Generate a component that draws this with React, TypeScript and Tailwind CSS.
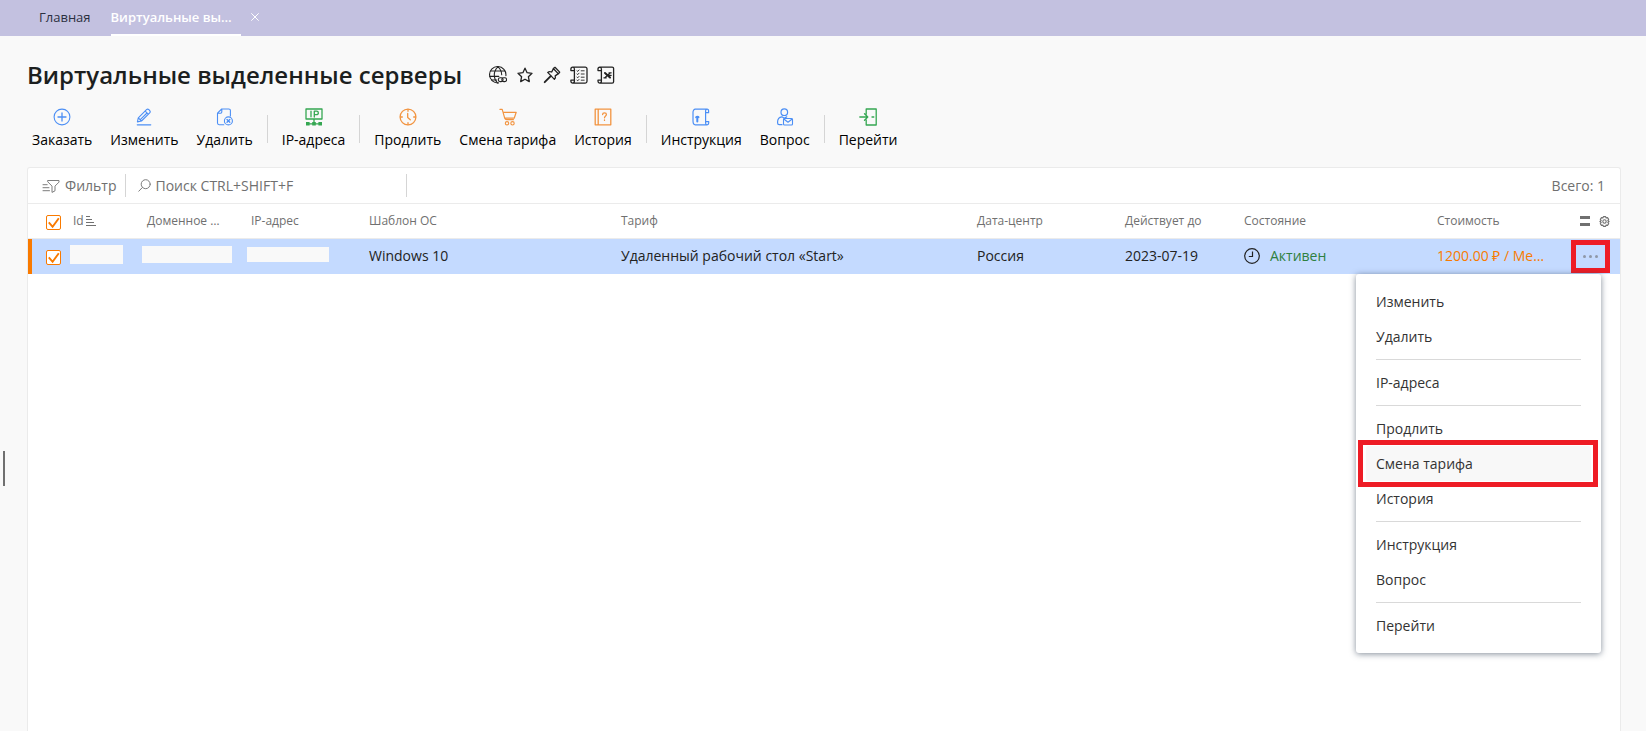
import React from 'react';

type IconProps = { className?: string; children: React.ReactNode };

function Icon({ className = '', children }: IconProps) {
  return (
    <svg
      className={`h-[18px] w-[18px] shrink-0 ${className}`}
      viewBox="0 0 18 18"
      fill="none"
      stroke="currentColor"
      strokeWidth="1.1"
      strokeLinecap="round"
      strokeLinejoin="round"
      aria-hidden="true"
    >
      {children}
    </svg>
  );
}

/* Title icons */
const GlobeIcon = () => (
  <Icon>
    <path d="M16.9 9.6A8.2 8.2 0 1 0 9.6 16.9" />
    <path d="M9 .8C6.4 3 5.3 6 5.3 9c0 3 1 5.700 3.200 7.800M9 .8c2.400 2 3.600 4.700 3.700 8M2 5h14M.8 10.400h9M2.600 14h5" />
    <rect x="9.300" y="11.800" width="4.800" height="3.800" rx="1.900" />
    <rect x="12.800" y="11.800" width="4.800" height="3.800" rx="1.900" />
  </Icon>
);

const StarIcon = () => (
  <Icon>
    <path strokeWidth="1.3" d="M9 2.200l2.100 4.500 4.900.6-3.600 3.400.9 4.900L9 13.200l-4.300 2.400.9-4.900L2 7.300l4.900-.6z" />
  </Icon>
);

const PinIcon = () => (
  <Icon>
    <path strokeWidth="1.300" d="M10.300 2.500l1.700-1.200 4.700 4.800-1.300 1.800zM10.300 2.900L8.700 6M15 7.900l-2.800 2M8.700 6c-1.500-.6-2.900-.5-4 .4l6.700 7c1-1 1.300-2.200.8-3.500" />
    <path strokeWidth="1.900" d="M7.700 10.200L1.700 16.200" />
  </Icon>
);

const ScrollIcon = () => (
  <Icon>
    <path strokeWidth="1.3" d="M4.300 4.600H.9V3a1.800 1.800 0 0 1 1.700-1.900h12.600A1.800 1.800 0 0 1 17 3v12.200a1.900 1.900 0 0 1-1.800 1.900H2.700A1.800 1.800 0 0 1 .9 15.300v-1.100h3.400M4.400 14.200V3c0-1.100-.7-1.900-1.700-1.900M4.400 14.200V15c0 1.200-.6 2.100-1.700 2.100" />
    <path strokeWidth=".9" d="M7 4.800l.8.600 1.200-1.400M11.200 4.800h3M7 8l.8.600L9 7.200M11.200 8h3M7 11.200l.8.600L9 10.400M11.200 11.200h3M7 14.200l.8.600L9 13.400M11.200 14.200h3" />
  </Icon>
);

const ExcelIcon = () => (
  <Icon>
    <path strokeWidth="1.300" d="M4.300 4.600H1V3a1.800 1.800 0 0 1 1.700-1.900h12.500A1.400 1.400 0 0 1 16.600 2.500v13.200a1.400 1.400 0 0 1-1.400 1.400H2.700A1.800 1.800 0 0 1 1 15.300v-1.100h3.300M4.400 14.200V3c0-1.100-.7-1.900-1.700-1.900M4.400 14.200V15c0 1.200-.6 2.100-1.700 2.100" />
    <path strokeWidth="2" d="M8 7l5 4.600" />
    <path strokeWidth="1.200" d="M13.300 6.800l-5.400 5M12 6.800h2.200M6.900 11.800h2.400M12 9.300h2.200" />
  </Icon>
);

/* Toolbar icons */
const PlusIcon = () => (
  <Icon className="text-[#4c8ff5]">
    <circle cx="9" cy="9" r="7.900" />
    <path strokeWidth="1.300" d="M9 5v8M5 9h8" />
  </Icon>
);

const PencilIcon = () => (
  <Icon className="text-[#4c8ff5]">
    <path d="M2.400 13.900l.9-4.100L11.500 1.700c.9-.8 1.600-.7 2.400 0l.8.900c.7.800.8 1.500 0 2.300L6.500 13zM10.200 3.100L13.300 6.200M3.300 9.800L6.500 13M12 5L5.500 11.400" />
    <path strokeWidth="1.300" d="M2.300 16.800h13.400" />
  </Icon>
);

const DeleteIcon = () => (
  <Icon className="text-[#4c8ff5]">
    <path d="M7.800 16.700H3.100a1.600 1.600 0 0 1-1.600-1.600V5.200L5.700 1h7.100a1.600 1.600 0 0 1 1.600 1.600V8M5.800 1.200v2.900c0 .8-.5 1.200-1.200 1.200h-3" />
    <circle cx="12.400" cy="12.900" r="4" />
    <path strokeWidth="1.300" d="M11 11.500l2.800 2.800M13.800 11.500L11 14.300" />
  </Icon>
);

const IpIcon = () => (
  <Icon className="text-[#35a752]">
    <path strokeWidth="1.300" d="M1 1h16v10H1zM9 11v5M3 15.800h12M6 3.200v5.600M9.300 9V3.200h2.300a1.700 1.700 0 0 1 0 3.500H9.300" />
    <path fill="currentColor" stroke="none" d="M1 14h3.600v3.500H1zM7.200 14h3.600v3.500H7.200zM13.400 14H17v3.500h-3.600z" />
  </Icon>
);

const ClockIcon = () => (
  <Icon className="text-[#f29440]">
    <circle cx="9" cy="9" r="7.900" strokeWidth="1.300" />
    <path strokeWidth="1.300" d="M9 1.500v1.800M9 14.700v1.800M1.500 9h1.800M14.700 9h1.800M8.700 5.500v4.100l2.600 2.200" />
  </Icon>
);

const CartIcon = () => (
  <Icon className="text-[#f29440]">
    <path strokeWidth="1.200" d="M.9 1.300h2.300l2.500 8.900c.3 1 .9 1.500 2 1.500h6.700M4 4.300h13.200l-2 5.900H5.700" />
    <circle cx="8" cy="15.300" r="1.700" />
    <circle cx="13.500" cy="15.300" r="1.700" />
  </Icon>
);

const HistoryIcon = () => (
  <Icon className="text-[#f29440]">
    <path strokeWidth="1.300" d="M1.200 1.200h15.600v15.600H1.200zM4.200 1.200v15.600M8.600 6.600c0-1.100.8-1.700 1.900-1.700s1.900.6 1.900 1.700c0 1.300-1.900 1.500-1.900 3.200M10.500 12v.4" />
  </Icon>
);

const ManualIcon = () => (
  <Icon className="text-[#4c8ff5]">
    <path strokeWidth="1.200" d="M16.600 4.700V2.900c0-.9-.5-1.700-1.500-1.700H3.300c-1.300 0-2.300 1.300-2.300 3v8.600c0 2 .6 4 2.300 4h11.800c1 0 1.600-.8 1.600-1.700v-1.500M16.600 4.700h-3V2.900c0-1 .6-1.700 1.500-1.700M13.600 4.700v10.200c0 1.100.5 1.900 1.500 1.900M13.600 13.600h3.100" />
    <path strokeWidth="2" d="M5.300 9.200v4.200" />
    <path strokeWidth="1.500" d="M3.900 9.500c0-1.400 2.800-1.400 2.800 0" />
  </Icon>
);

const QuestionIcon = () => (
  <Icon className="text-[#4c8ff5]">
    <circle cx="8.300" cy="4.200" r="3.300" strokeWidth="1.200" />
    <path strokeWidth="1.200" d="M6 16.700H3.200c-1.100 0-1.600-.6-1.600-1.600v-1.300c0-3.200 1.500-4.600 4.300-5l2.400 1.400 2.400-1.300" />
    <rect x="7.500" y="10.500" width="9" height="6.500" rx="1" />
    <path d="M7.800 11l4.200 3.300L16.200 11" />
  </Icon>
);

const EnterIcon = () => (
  <Icon className="text-[#35a752]">
    <path strokeWidth="1.300" d="M7.200 6.200V1h10v16h-10v-5.200M.8 9h8M5.500 5.800L8.800 9l-3.300 3.200M13 9h1.800" />
  </Icon>
);

/* Panel icons */
const FilterIcon = () => (
  <Icon className="text-[#7d7d7d]">
    <path strokeWidth="1" d="M6 3.500h11v1.600l-4 4v4.700l-3 1.600V9.100l-4-4zM1 7.700h4.200M1 10.700h6M1 13.700h6.500" />
  </Icon>
);

const SearchIcon = () => (
  <svg className="h-[13px] w-[13px] shrink-0 text-[#7d7d7d]" viewBox="0 0 13 13" fill="none" stroke="currentColor" strokeLinecap="round" aria-hidden="true">
    <circle cx="7.700" cy="5.200" r="4.500" />
    <path d="M4.500 8.400L.8 12.200" />
  </svg>
);

const SortIcon = () => (
  <svg className="h-[11px] w-[11px] shrink-0" viewBox="0 0 11 11" stroke="currentColor" aria-hidden="true">
    <path d="M0 .5h4M0 3.500h6M0 6.500h8M0 9.500h10" />
  </svg>
);

const GearIcon = () => (
  <svg className="h-[11px] w-[11px]" viewBox="0 0 11 11" fill="none" stroke="currentColor" strokeWidth="1.100" strokeLinejoin="round" aria-hidden="true">
    <path d="M4.400.6h2.200l.4 1.300 1.500-.3 1.200 1.800-.9 1.100 1.300 1-1.300 1 .9 1.100-1.200 1.800-1.500-.3-.4 1.300H4.400l-.4-1.300-1.500.3-1.200-1.800.9-1.100-1.300-1 1.300-1-.9-1.100 1.200-1.800 1.500.3z" />
    <circle cx="5.500" cy="5.500" r="1.700" />
  </svg>
);

const StatusIcon = () => (
  <svg className="h-4 w-4 shrink-0" viewBox="0 0 16 16" fill="none" stroke="currentColor" strokeWidth="1.200" aria-hidden="true">
    <circle cx="8" cy="8" r="7.300" />
    <path d="M8.500 3.500v5H4.800" />
  </svg>
);

type Tool = { label: string; icon: () => React.JSX.Element };

const toolGroups: Tool[][] = [
  [
    { label: 'Заказать', icon: PlusIcon },
    { label: 'Изменить', icon: PencilIcon },
    { label: 'Удалить', icon: DeleteIcon },
  ],
  [{ label: 'IP-адреса', icon: IpIcon }],
  [
    { label: 'Продлить', icon: ClockIcon },
    { label: 'Смена тарифа', icon: CartIcon },
    { label: 'История', icon: HistoryIcon },
  ],
  [
    { label: 'Инструкция', icon: ManualIcon },
    { label: 'Вопрос', icon: QuestionIcon },
  ],
  [{ label: 'Перейти', icon: EnterIcon }],
];

const menuGroups = [
  ['Изменить', 'Удалить'],
  ['IP-адреса'],
  ['Продлить', 'Смена тарифа', 'История'],
  ['Инструкция', 'Вопрос'],
  ['Перейти'],
];

function CheckBox({ label }: { label: string }) {
  return (
    <label className="relative mt-[3px] ml-[18px] block h-[15px] w-[15px]">
      <input
        type="checkbox"
        defaultChecked
        aria-label={label}
        className="peer block h-[15px] w-[15px] appearance-none rounded-[2px] border border-[#f97a00] bg-white"
      />
      <svg className="pointer-events-none absolute inset-0 hidden h-[15px] w-[15px] text-[#f97a00] peer-checked:block" viewBox="0 0 15 15" fill="none" stroke="currentColor" strokeWidth="1.900" aria-hidden="true">
        <path d="M2.800 7.300l3.800 4.500L12.800 3.200" />
      </svg>
    </label>
  );
}

function RowMenu() {
  return (
    <div className="absolute top-[35px] right-[19px] z-10 w-[245px] rounded-[3px] bg-white py-[10px] shadow-[0_1px_6px_rgba(50,65,85,0.6)]">
      {menuGroups.map((group, i) => (
        <div key={i}>
          {i > 0 && <hr className="mx-5 my-[5px] border-[#d9d9d9]" />}
          {group.map((label) => (
            <div key={label} className="relative px-[10px]">
              <button
                type="button"
                className={`block h-[35px] w-full rounded-[3px] px-[10px] text-left text-[#333] ${label === 'Смена тарифа' ? 'bg-[#f8f8f8]' : ''}`}
              >
                {label}
              </button>
              {label === 'Смена тарифа' && (
                <span className="pointer-events-none absolute -inset-y-[6px] right-[3px] left-[2px] z-10 border-5 border-[#ee1c25]" />
              )}
            </div>
          ))}
        </div>
      ))}
    </div>
  );
}

export default function App() {
  return (
    <div className="relative flex min-h-screen flex-col bg-[#f9f9f9] font-['Open_Sans',sans-serif] text-[14px] leading-5 text-[#222]">
      {/* Tabs */}
      <nav className="flex h-9 shrink-0 bg-[#c3c1e0] pl-[39px] text-[13px]">
        <a href="#home" className="mr-5 pt-[7px] text-[#2b3040]">Главная</a>
        <a href="#servers" className="w-[130px] border-b-2 border-white pt-[7px] font-semibold whitespace-nowrap text-white">
          Виртуальные вы…
        </a>
        <button type="button" aria-label="Закрыть вкладку" className="ml-[10px] flex h-[34px] items-center text-white">
          <svg className="h-2 w-2" viewBox="0 0 8 8" stroke="currentColor" aria-hidden="true">
            <path d="M.3.3l7.400 7.400M7.700.3L.3 7.700" />
          </svg>
        </button>
      </nav>

      <main className="flex grow flex-col pt-[23px] pr-[25px] pl-[27px]">
        {/* Title */}
        <header className="flex h-8 items-center">
          <h1 className="w-[462px] text-[24px] font-semibold whitespace-nowrap text-[#1c1f1f]">Виртуальные выделенные серверы</h1>
          <div className="flex gap-[9px] text-[#222]">
            <button type="button" aria-label="Ссылка"><GlobeIcon /></button>
            <button type="button" aria-label="В избранное"><StarIcon /></button>
            <button type="button" aria-label="Закрепить"><PinIcon /></button>
            <button type="button" aria-label="Список"><ScrollIcon /></button>
            <button type="button" aria-label="Экспорт"><ExcelIcon /></button>
          </div>
        </header>

        {/* Toolbar */}
        <div className="mt-[17px] mb-[17px] flex items-center text-black">
          {toolGroups.map((group, i) => (
            <React.Fragment key={i}>
              {i > 0 && <span className="mx-[5px] h-7 w-px bg-[#d5d5d5]" />}
              {group.map(({ label, icon: ToolIcon }) => (
                <button
                  key={label}
                  type="button"
                  className="flex flex-col items-center gap-1 px-[9px] whitespace-nowrap first:pl-[5px]"
                >
                  <ToolIcon />
                  {label}
                </button>
              ))}
            </React.Fragment>
          ))}
        </div>

        {/* Servers */}
        <section className="grow rounded-t-[3px] border border-b-0 border-[#ebebeb] bg-white text-[#707070]">
          <div className="flex h-[35px] items-center pr-[15px] pl-[14px]">
            <button type="button" className="flex items-center gap-[5px]">
              <FilterIcon />
              Фильтр
            </button>
            <label className="ml-[9px] flex h-[23px] w-[282px] items-center gap-1 border-x border-[#d5d5d5] pl-3">
              <SearchIcon />
              <input
                type="text"
                aria-label="Поиск"
                placeholder="Поиск CTRL+SHIFT+F"
                className="w-full bg-transparent outline-none placeholder:text-[#707070]"
              />
            </label>
            <span className="ml-auto">Всего: 1</span>
          </div>

          <table className="w-full table-fixed border-collapse text-left whitespace-nowrap">
            <colgroup>
              <col className="w-[45px]" />
              <col className="w-[74px]" />
              <col className="w-[104px]" />
              <col className="w-[118px]" />
              <col className="w-[252px]" />
              <col />
              <col className="w-[148px]" />
              <col className="w-[119px]" />
              <col className="w-[193px]" />
              <col className="w-[114px]" />
              <col className="w-[69px]" />
            </colgroup>
            <thead>
              <tr className="h-[35px] border-y border-[#ebebeb] text-[12px] [&>th]:p-0 [&>th]:font-normal">
                <th><CheckBox label="Выбрать все" /></th>
                <th>
                  <span className="flex items-center gap-[2px]">Id <SortIcon /></span>
                </th>
                <th>Доменное …</th>
                <th>IP-адрес</th>
                <th>Шаблон ОС</th>
                <th>Тариф</th>
                <th>Дата-центр</th>
                <th>Действует до</th>
                <th>Состояние</th>
                <th>Стоимость</th>
                <th>
                  <div className="flex items-center justify-end gap-[9px] pr-[10px]">
                    <button type="button" aria-label="Высота строк" className="h-[10px] w-[10px] border-y-3 border-[#707070]" />
                    <button type="button" aria-label="Настройки"><GearIcon /></button>
                  </div>
                </th>
              </tr>
            </thead>
            <tbody>
              <tr className="h-[35px] bg-[#c4daff] text-[#222] [&>td]:p-0">
                <td className="shadow-[inset_4px_0_0_#f97a00]"><CheckBox label="Выбрать сервер" /></td>
                <td><div className="-mt-1 -ml-[3px] h-[19px] w-[53px] bg-[#f9f9f9]" /></td>
                <td><div className="-mt-1 -ml-[5px] h-[17px] w-[90px] bg-[#f9f9f9]" /></td>
                <td><div className="-mt-1 -ml-1 h-[15px] w-[82px] bg-[#f9f9f9]" /></td>
                <td>Windows 10</td>
                <td>Удаленный рабочий стол «Start»</td>
                <td>Россия</td>
                <td>2023-07-19</td>
                <td>
                  <span className="flex items-center gap-[10px]">
                    <StatusIcon />
                    <span className="text-[#2e8040]">Активен</span>
                  </span>
                </td>
                <td className="text-[#f97a00]">1200.00 ₽ / Ме…</td>
                <td className="relative">
                  <button
                    type="button"
                    aria-label="Действия"
                    className="mt-[1px] mr-[10px] ml-auto flex h-[33px] w-[39px] items-center justify-center gap-[3px] border-5 border-[#ee1c25]"
                  >
                    <span className="h-[3px] w-[3px] rounded-full bg-[#8f98a8]" />
                    <span className="h-[3px] w-[3px] rounded-full bg-[#8f98a8]" />
                    <span className="h-[3px] w-[3px] rounded-full bg-[#8f98a8]" />
                  </button>
                  <RowMenu />
                </td>
              </tr>
            </tbody>
          </table>
        </section>
      </main>

      {/* Side panel handle */}
      <button type="button" aria-label="Открыть панель" className="absolute top-[451px] left-[3px] h-[35px] w-[2px] bg-[#707070]" />
    </div>
  );
}
